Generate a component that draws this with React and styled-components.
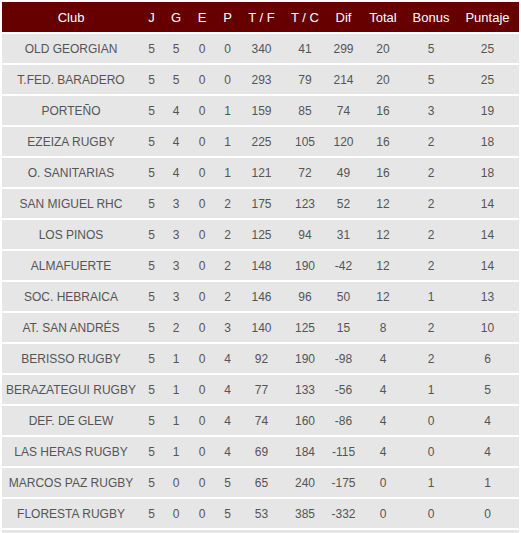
import React from "react";
import styled, { createGlobalStyle } from "styled-components";

const GlobalStyle = createGlobalStyle`
  body {
    margin: 0;
    background: #fff;
    font-family: "Liberation Sans", Arial, sans-serif;
  }
`;

const Wrapper = styled.div`
  padding: 2px 2px 0 2px;
`;

const Table = styled.table`
  width: 517px;
  border-collapse: collapse;
  table-layout: fixed;
`;

const HeadCell = styled.th`
  background: #660000;
  color: #fff;
  font-weight: normal;
  font-size: 13px;
  height: 30px;
  padding: 0;
  text-align: center;
  border-bottom: 2px solid #fff;
  width: ${({ w }) => w}px;
`;

const Row = styled.tr`
  background: #e6e6e6;
`;

const Cell = styled.td`
  color: #555;
  font-size: 12px;
  height: 29px;
  padding: 0;
  text-align: center;
  border-bottom: 2px solid #fff;
  white-space: nowrap;
`;

const columns = [
  ["Club", 138],
  ["J", 23],
  ["G", 26],
  ["E", 26],
  ["P", 25],
  ["T / F", 43],
  ["T / C", 44],
  ["Dif", 33],
  ["Total", 46],
  ["Bonus", 50],
  ["Puntaje", 63],
];

const rows = [
  ["OLD GEORGIAN", 5, 5, 0, 0, 340, 41, 299, 20, 5, 25],
  ["T.FED. BARADERO", 5, 5, 0, 0, 293, 79, 214, 20, 5, 25],
  ["PORTEÑO", 5, 4, 0, 1, 159, 85, 74, 16, 3, 19],
  ["EZEIZA RUGBY", 5, 4, 0, 1, 225, 105, 120, 16, 2, 18],
  ["O. SANITARIAS", 5, 4, 0, 1, 121, 72, 49, 16, 2, 18],
  ["SAN MIGUEL RHC", 5, 3, 0, 2, 175, 123, 52, 12, 2, 14],
  ["LOS PINOS", 5, 3, 0, 2, 125, 94, 31, 12, 2, 14],
  ["ALMAFUERTE", 5, 3, 0, 2, 148, 190, -42, 12, 2, 14],
  ["SOC. HEBRAICA", 5, 3, 0, 2, 146, 96, 50, 12, 1, 13],
  ["AT. SAN ANDRÉS", 5, 2, 0, 3, 140, 125, 15, 8, 2, 10],
  ["BERISSO RUGBY", 5, 1, 0, 4, 92, 190, -98, 4, 2, 6],
  ["BERAZATEGUI RUGBY", 5, 1, 0, 4, 77, 133, -56, 4, 1, 5],
  ["DEF. DE GLEW", 5, 1, 0, 4, 74, 160, -86, 4, 0, 4],
  ["LAS HERAS RUGBY", 5, 1, 0, 4, 69, 184, -115, 4, 0, 4],
  ["MARCOS PAZ RUGBY", 5, 0, 0, 5, 65, 240, -175, 0, 1, 1],
  ["FLORESTA RUGBY", 5, 0, 0, 5, 53, 385, -332, 0, 0, 0],
  ["", "", "", "", "", "", "", "", "", "", ""],
];

export default function App() {
  return (
    <Wrapper>
      <GlobalStyle />
      <Table>
        <thead>
          <tr>
            {columns.map(([label, w]) => (
              <HeadCell key={label} w={w}>
                {label}
              </HeadCell>
            ))}
          </tr>
        </thead>
        <tbody>
          {rows.map((r, i) => (
            <Row key={i}>
              {r.map((v, j) => (
                <Cell key={j}>{v}</Cell>
              ))}
            </Row>
          ))}
        </tbody>
      </Table>
    </Wrapper>
  );
}
